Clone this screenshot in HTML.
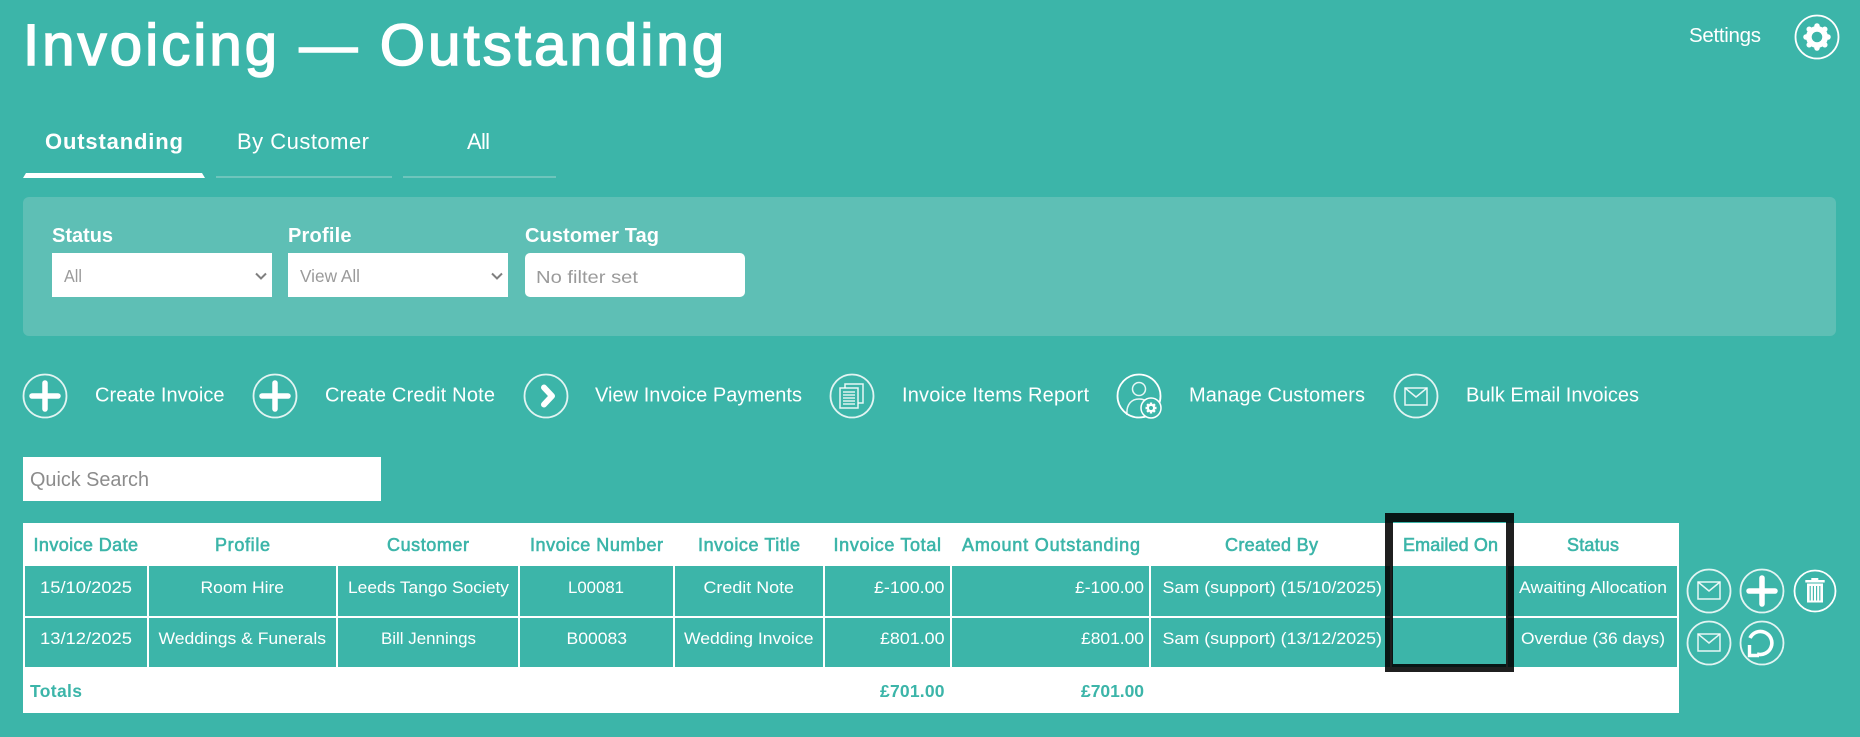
<!DOCTYPE html>
<html lang="en">
<head>
<meta charset="utf-8">
<title>Invoicing — Outstanding</title>
<style>
html,body{margin:0;padding:0;width:1860px;height:737px;overflow:hidden;background:#3cb5a9;font-family:"Liberation Sans",sans-serif}
.b{position:absolute}
svg{position:absolute;left:0;top:0}
text{font-family:"Liberation Sans",sans-serif}
.w{fill:#fff}
.title{font-size:58px;fill:#fff;stroke:#fff;stroke-width:1.6px}
.tab{font-size:22px;fill:#fff}
.tabb{font-size:22px;font-weight:700;fill:#fff}
.lab{font-size:20px;font-weight:700;fill:#fff}
.ph{font-size:17.500px;fill:#9a9a9a}
.act{font-size:20px;fill:#fff}
.th{font-size:18px;fill:#3cb5a9;stroke:#3cb5a9;stroke-width:.6px}
.td{font-size:17px;fill:#fff}
.tot{font-size:17.500px;font-weight:700;fill:#3cb5a9}
.c{fill:none;stroke:#fff;stroke-opacity:.85;stroke-width:1.8}
.ic{fill:none;stroke:#fff;stroke-opacity:.88;stroke-width:1.5}
.p{fill:none;stroke:#fff;stroke-width:5.500;stroke-linecap:round;stroke-linejoin:round}
</style>
</head>
<body>
<!-- panel -->
<div class="b" style="left:23px;top:197px;width:1813px;height:139px;background:#5ebfb5;border-radius:6px"></div>
<div class="b" style="left:52px;top:253px;width:220px;height:44px;background:#fff"></div>
<div class="b" style="left:288px;top:253px;width:220px;height:44px;background:#fff"></div>
<div class="b" style="left:525px;top:253px;width:220px;height:44px;background:#fff;border-radius:5px"></div>
<!-- quick search -->
<div class="b" style="left:23px;top:457px;width:358px;height:44px;background:#fff"></div>
<!-- table -->
<div class="b" style="left:23px;top:523px;width:1656px;height:190px;background:#fff"></div>
<div class="b" style="left:25px;top:566px;width:122px;height:50px;background:#3cb5a9"></div>
<div class="b" style="left:149px;top:566px;width:187px;height:50px;background:#3cb5a9"></div>
<div class="b" style="left:338px;top:566px;width:180px;height:50px;background:#3cb5a9"></div>
<div class="b" style="left:520px;top:566px;width:153px;height:50px;background:#3cb5a9"></div>
<div class="b" style="left:675px;top:566px;width:148px;height:50px;background:#3cb5a9"></div>
<div class="b" style="left:825px;top:566px;width:125px;height:50px;background:#3cb5a9"></div>
<div class="b" style="left:952px;top:566px;width:197px;height:50px;background:#3cb5a9"></div>
<div class="b" style="left:1151px;top:566px;width:239px;height:50px;background:#3cb5a9"></div>
<div class="b" style="left:1392px;top:566px;width:114px;height:50px;background:#3cb5a9"></div>
<div class="b" style="left:1508px;top:566px;width:169px;height:50px;background:#3cb5a9"></div>
<div class="b" style="left:25px;top:618px;width:122px;height:49px;background:#3cb5a9"></div>
<div class="b" style="left:149px;top:618px;width:187px;height:49px;background:#3cb5a9"></div>
<div class="b" style="left:338px;top:618px;width:180px;height:49px;background:#3cb5a9"></div>
<div class="b" style="left:520px;top:618px;width:153px;height:49px;background:#3cb5a9"></div>
<div class="b" style="left:675px;top:618px;width:148px;height:49px;background:#3cb5a9"></div>
<div class="b" style="left:825px;top:618px;width:125px;height:49px;background:#3cb5a9"></div>
<div class="b" style="left:952px;top:618px;width:197px;height:49px;background:#3cb5a9"></div>
<div class="b" style="left:1151px;top:618px;width:239px;height:49px;background:#3cb5a9"></div>
<div class="b" style="left:1392px;top:618px;width:114px;height:49px;background:#3cb5a9"></div>
<div class="b" style="left:1508px;top:618px;width:169px;height:49px;background:#3cb5a9"></div>
<!-- highlight box -->
<div class="b" style="left:1385px;top:513px;width:113px;height:142px;border:solid rgba(0,0,0,.88);border-width:9px 8.500px 8.500px 8.500px"></div>

<svg width="1860" height="737" viewBox="0 0 1860 737" xmlns="http://www.w3.org/2000/svg">
<defs>
<g id="env"><rect x="-11" y="-9" width="22" height="17" class="ic"/><path d="M-11-9 0 0 11-9" class="ic"/></g>
<g id="plus"><path d="M-13 0H13M0-13V13" class="p"/></g>
</defs>

<!-- header -->
<text class="title" x="23" y="65" textLength="701" lengthAdjust="spacing">Invoicing — Outstanding</text>
<text class="w" style="font-size:20.500px" x="1689" y="42" textLength="72" lengthAdjust="spacing">Settings</text>
<circle cx="1817" cy="37" r="21.500" class="c" style="stroke-opacity:1"/>
<g transform="translate(1817 37)">
<circle r="11" fill="#fff"/>
<path d="M0-11V11M-11 0H11M-7.800-7.800 7.800 7.800M-7.800 7.800 7.800-7.800" stroke="#fff" stroke-width="5.500" stroke-linecap="round"/>
<circle r="5.300" fill="#3cb5a9"/>
</g>

<!-- tabs -->
<text class="tabb" x="45" y="149" textLength="138" lengthAdjust="spacing">Outstanding</text>
<text class="tab" x="237" y="149" textLength="132" lengthAdjust="spacing">By Customer</text>
<text class="tab" x="467" y="149" textLength="23" lengthAdjust="spacing">All</text>
<polygon points="26,173 202,173 205,178 23,178" fill="#fff"/>
<rect x="216" y="176" width="176" height="2" fill="#6ec5bc"/>
<rect x="403" y="176" width="153" height="2" fill="#6ec5bc"/>

<!-- filter panel -->
<text class="lab" x="52" y="242" textLength="61" lengthAdjust="spacing">Status</text>
<text class="lab" x="288" y="242" textLength="63.500" lengthAdjust="spacing">Profile</text>
<text class="lab" x="525" y="242" textLength="134" lengthAdjust="spacing">Customer Tag</text>
<text class="ph" x="64" y="282" textLength="18" lengthAdjust="spacingAndGlyphs">All</text>
<text class="ph" x="300" y="282" textLength="60" lengthAdjust="spacingAndGlyphs">View All</text>
<text class="ph" x="536" y="283" textLength="102" lengthAdjust="spacingAndGlyphs">No filter set</text>
<path d="M256 273.500 261 278.500 266 273.500" fill="none" stroke="#808080" stroke-width="2"/>
<path d="M492 273.500 497 278.500 502 273.500" fill="none" stroke="#808080" stroke-width="2"/>

<!-- actions -->
<circle cx="45" cy="396" r="21.500" class="c"/><use href="#plus" x="45" y="396"/>
<text class="act" x="95" y="401.500" textLength="129.500" lengthAdjust="spacing">Create Invoice</text>
<circle cx="275" cy="396" r="21.500" class="c"/><use href="#plus" x="275" y="396"/>
<text class="act" x="325" y="401.500" textLength="170" lengthAdjust="spacing">Create Credit Note</text>
<circle cx="546" cy="396" r="21.500" class="c"/>
<path d="M544 387.500 552 396 544 404.500" class="p" style="stroke-width:6"/>
<text class="act" x="595" y="401.500" textLength="207" lengthAdjust="spacing">View Invoice Payments</text>
<circle cx="852" cy="396" r="21.500" class="c"/>
<path d="M845 388V384H863V403H858" class="ic"/>
<rect x="840" y="388" width="18" height="20" class="ic"/>
<path d="M843 392H855M843 395H855M843 398H855M843 401H855M843 404H855" stroke="#fff" stroke-width="1.200"/>
<text class="act" x="902" y="401.500" textLength="187" lengthAdjust="spacing">Invoice Items Report</text>
<circle cx="1139" cy="396" r="21.500" class="c" style="stroke-opacity:1"/>
<circle cx="1139" cy="389" r="6.500" class="ic"/>
<path d="M1127 415C1126 404 1132 399 1139 399 1142 399 1145 400 1147 401" class="ic"/>
<circle cx="1151" cy="408" r="10" fill="#3cb5a9" stroke="#fff" stroke-width="1.500"/>
<g transform="translate(1151 408)">
<path d="M0-5.500V5.500M-5.500 0H5.500M-3.900-3.900 3.900 3.900M-3.900 3.900 3.900-3.900" stroke="#fff" stroke-width="2.400"/>
<circle r="4.200" fill="#fff"/><circle r="2" fill="#3cb5a9"/>
</g>
<text class="act" x="1189" y="401.500" textLength="176" lengthAdjust="spacing">Manage Customers</text>
<circle cx="1416" cy="396" r="21.500" class="c"/><use href="#env" x="1416" y="397"/>
<text class="act" x="1466" y="401.500" textLength="173" lengthAdjust="spacing">Bulk Email Invoices</text>

<!-- quick search -->
<text style="font-size:20px;fill:#8c8c8c" x="30" y="486" textLength="119" lengthAdjust="spacingAndGlyphs">Quick Search</text>

<!-- table header -->
<text class="th" x="33.500" y="551" textLength="104.500" lengthAdjust="spacing">Invoice Date</text>
<text class="th" x="215" y="551" textLength="55" lengthAdjust="spacing">Profile</text>
<text class="th" x="387" y="551" textLength="82" lengthAdjust="spacing">Customer</text>
<text class="th" x="530" y="551" textLength="133" lengthAdjust="spacing">Invoice Number</text>
<text class="th" x="698" y="551" textLength="102" lengthAdjust="spacing">Invoice Title</text>
<text class="th" x="833.500" y="551" textLength="107.500" lengthAdjust="spacing">Invoice Total</text>
<text class="th" x="962" y="551" textLength="178" lengthAdjust="spacing">Amount Outstanding</text>
<text class="th" x="1225" y="551" textLength="93" lengthAdjust="spacing">Created By</text>
<text class="th" x="1403" y="551" textLength="95" lengthAdjust="spacing">Emailed On</text>
<text class="th" x="1567" y="551" textLength="52" lengthAdjust="spacing">Status</text>

<!-- row 1 -->
<text class="td" x="40" y="593" textLength="92" lengthAdjust="spacingAndGlyphs">15/10/2025</text>
<text class="td" x="200.500" y="593" textLength="83.500" lengthAdjust="spacingAndGlyphs">Room Hire</text>
<text class="td" x="348" y="593" textLength="161" lengthAdjust="spacingAndGlyphs">Leeds Tango Society</text>
<text class="td" x="568" y="593" textLength="56" lengthAdjust="spacingAndGlyphs">L00081</text>
<text class="td" x="703.500" y="593" textLength="90.500" lengthAdjust="spacingAndGlyphs">Credit Note</text>
<text class="td" x="874" y="593" textLength="70.500" lengthAdjust="spacingAndGlyphs">£-100.00</text>
<text class="td" x="1075" y="593" textLength="69" lengthAdjust="spacingAndGlyphs">£-100.00</text>
<text class="td" x="1162.500" y="593" textLength="219.500" lengthAdjust="spacingAndGlyphs">Sam (support) (15/10/2025)</text>
<text class="td" x="1519" y="593" textLength="148" lengthAdjust="spacingAndGlyphs">Awaiting Allocation</text>

<!-- row 2 -->
<text class="td" x="40" y="644" textLength="92" lengthAdjust="spacingAndGlyphs">13/12/2025</text>
<text class="td" x="158.500" y="644" textLength="167.500" lengthAdjust="spacingAndGlyphs">Weddings &amp; Funerals</text>
<text class="td" x="381" y="644" textLength="95" lengthAdjust="spacingAndGlyphs">Bill Jennings</text>
<text class="td" x="566.500" y="644" textLength="60.500" lengthAdjust="spacingAndGlyphs">B00083</text>
<text class="td" x="684" y="644" textLength="129.500" lengthAdjust="spacingAndGlyphs">Wedding Invoice</text>
<text class="td" x="880" y="644" textLength="64.500" lengthAdjust="spacingAndGlyphs">£801.00</text>
<text class="td" x="1081" y="644" textLength="63" lengthAdjust="spacingAndGlyphs">£801.00</text>
<text class="td" x="1162.500" y="644" textLength="219.500" lengthAdjust="spacingAndGlyphs">Sam (support) (13/12/2025)</text>
<text class="td" x="1521" y="644" textLength="144" lengthAdjust="spacingAndGlyphs">Overdue (36 days)</text>

<!-- totals -->
<text class="tot" x="30" y="697" textLength="52" lengthAdjust="spacing">Totals</text>
<text class="tot" x="880" y="697" textLength="64.500" lengthAdjust="spacing">£701.00</text>
<text class="tot" x="1081" y="697" textLength="63" lengthAdjust="spacing">£701.00</text>

<!-- row icons -->
<circle cx="1709" cy="591" r="21.500" class="c"/><use href="#env" x="1709" y="591"/>
<circle cx="1762" cy="591" r="21.500" class="c"/><use href="#plus" x="1762" y="591"/>
<circle cx="1815" cy="591" r="20.500" class="c" style="stroke-opacity:1"/>
<g transform="translate(1815 591)">
<rect x="-3.700" y="-13" width="7" height="2.500" fill="#fff"/>
<rect x="-9.700" y="-11" width="19.400" height="2.500" fill="#fff"/>
<rect x="-8" y="-7.500" width="16" height="19" fill="#fff"/>
<path d="M-4.800-5V9.500M-1.600-5V9.500M1.600-5V9.500M4.800-5V9.500" stroke="#3cb5a9" stroke-width="1.100"/>
</g>
<circle cx="1709" cy="643" r="21.500" class="c"/><use href="#env" x="1709" y="643"/>
<circle cx="1762" cy="643" r="21.500" class="c"/>
<g transform="translate(1762 643)" fill="none" stroke="#fff">
<path d="M-12-5A11.500 11.500 0 1 1-5 11" stroke-width="3.600"/>
<path d="M-12.500 2V12.500H-3" stroke-width="3.400"/>
</g>
</svg>
</body>
</html>
